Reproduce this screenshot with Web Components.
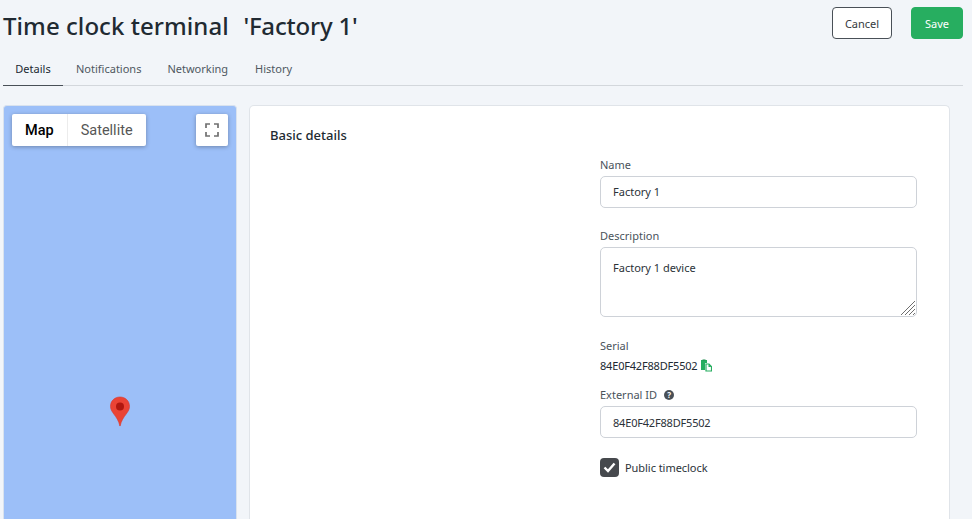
<!DOCTYPE html>
<html lang="en">
<head>
<meta charset="utf-8">
<title>Time clock terminal</title>
<style>
  html, body { margin: 0; height: 100%; overflow: hidden; }
  body { background: #f2f5f9; font-family: "Noto Sans", sans-serif; color: #212529; }
</style>
</head>
<body>
<terminal-page></terminal-page>

<script>
  // small helper, every element below is the same shape
  function define(name, html) {
    customElements.define(name, class extends HTMLElement {
      constructor() {
        super();
        this.attachShadow({ mode: 'open' }).innerHTML = html;
      }
    });
  }

  define('page-header', `
<style>
  :host { display: flex; justify-content: space-between; align-items: flex-start; padding: 7px 9px 0 3px; height: 46px; }
  h1 { margin: 0; font: 500 24px/37px "Noto Sans", sans-serif; letter-spacing: .06px; color: #212a32; white-space: pre; }
  h1 span { margin-left: 2px; letter-spacing: -.2px; }
  .actions { display: flex; gap: 19px; }
  button { height: 32px; border-radius: 4px; font: 400 11px "Noto Sans", sans-serif; padding: 0; }
  .cancel { width: 60px; background: #fff; border: 1px solid #495057; color: #343a40; }
  .save { width: 52px; background: #27ae60; border: 1px solid #27ae60; color: #fff; }
</style>
<h1>Time clock terminal  <span>'Factory 1'</span></h1>
<div class="actions">
  <button class="cancel">Cancel</button>
  <button class="save">Save</button>
</div>`);

  define('tab-bar', `
<style>
  :host { display: flex; margin: 0 9px 0 3px; height: 32px; border-bottom: 1px solid #d3d7dc; }
  a { padding: 0 13px; font: 400 11px/32px "Noto Sans", sans-serif; color: #4f5861; height: 32px; }
  a.active { color: #212a32; border-bottom: 1px solid #495057; width: 60px; padding: 0; text-align: center; }
  a:last-child { margin-left: 1px; }
</style>
<a class="active">Details</a><a>Notifications</a><a>Networking</a><a>History</a>`);

  define('map-panel', `
<style>
  :host { display: block; position: relative; width: 234px; height: 420px; box-sizing: border-box; background: #9cbff8; border-radius: 4px 4px 0 0; border: 1px solid #d9e2ee; border-bottom: 0; overflow: hidden; }
  .types { position: absolute; left: 8px; top: 8px; display: flex; height: 32px; background: #fff; border-radius: 2px; box-shadow: 0 1px 4px rgba(0,0,0,.3); font: 400 14.500px/33px Roboto, sans-serif; }
  .types span { padding: 0 13px; color: #565656; }
  .types span:first-child { font-weight: 500; color: #000; border-right: 1px solid #ececec; }
  .full { position: absolute; left: 192px; top: 8px; width: 32px; height: 32px; background: #fff; border-radius: 2px; box-shadow: 0 1px 4px rgba(0,0,0,.3); display: flex; align-items: center; justify-content: center; }
  .pin { position: absolute; left: 105px; top: 290px; }
</style>
<div class="types"><span>Map</span><span>Satellite</span></div>
<div class="full">
  <svg width="14" height="14" viewBox="0 0 14 14" fill="none" stroke="#707070" stroke-width="1.700">
    <path d="M1 5V1h4M9 1h4v4M13 9v4H9M5 13H1V9"/>
  </svg>
</div>
<svg class="pin" width="22" height="32" viewBox="0 0 22 32">
  <path d="M11 1C5.500 1 1.500 5 1.500 10.300c0 3.200 1.500 5.300 3.500 8 2.200 3 4.700 6.200 5.900 11.700h.2c1.200-5.500 3.700-8.700 5.900-11.700 2-2.700 3.500-4.800 3.500-8C20.500 5 16.500 1 11 1z" fill="#ea4335" stroke="#d9352a" stroke-width=".6"/>
  <circle cx="11" cy="10.500" r="4" fill="#b0170f"/>
</svg>`);

  define('form-field', `
<style>
  :host { display: block; }
  label { display: flex; align-items: center; font: 400 11px/15px "Noto Sans", sans-serif; color: #4a535b; margin-bottom: 4px; }
  .box { box-sizing: border-box; width: 317px; height: var(--h, 32px); padding: 0 12px; background: #fff; border: 1px solid #ced2d8; border-radius: 5px; font: 400 11px/var(--lh, 30px) "Noto Sans", sans-serif; letter-spacing: var(--ls, 0); color: #2b3238; position: relative; }
</style>
<label><slot name="label"></slot></label>
<div class="box"><slot></slot></div>`);

  define('resize-grip', `
<style>
  :host { position: absolute; right: 0; bottom: 0; width: 16px; height: 16px; line-height: 0; }
</style>
<svg width="16" height="16" viewBox="0 0 16 16" stroke="#6e6e6e" stroke-width="1" fill="none">
  <path d="M1 15 15 1M5 15 15 5M9 15l6-6M13 15l2-2"/>
</svg>`);

  define('serial-line', `
<style>
  :host { display: block; }
  .label { font: 400 11px/15px "Noto Sans", sans-serif; color: #4a535b; margin-bottom: 5px; }
  .value { display: flex; align-items: center; gap: 3px; font: 400 11px/15px "Noto Sans", sans-serif; letter-spacing: -.19px; color: #212a32; }
</style>
<div class="label">Serial</div>
<div class="value">84E0F42F88DF5502
  <svg width="12" height="13" viewBox="0 0 12 13">
    <path d="M1 1h6v3H5v7H1z" fill="#27ae60"/>
    <path d="M2.500 .5h3v1h-3z" fill="#1e8a4c"/>
    <path d="M6 5h3l2.500 2.500V12H6z" fill="#fff" stroke="#27ae60" stroke-width="1.200"/>
    <path d="M8.500 5v3h3" fill="#27ae60"/>
  </svg>
</div>`);

  define('check-row', `
<style>
  :host { display: flex; align-items: center; gap: 6px; font: 400 11px/19px "Noto Sans", sans-serif; letter-spacing: -.05px; color: #2b3238; }
  .tick { width: 19px; height: 19px; border-radius: 4px; background: #46494d; display: flex; align-items: center; justify-content: center; }
</style>
<span class="tick">
  <svg width="13" height="11" viewBox="0 0 13 11" fill="none" stroke="#fff" stroke-width="2.400">
    <path d="M1.500 5.500 5 9l6.500-7.500"/>
  </svg>
</span>
<slot></slot>`);

  define('details-card', `
<style>
  :host { display: block; box-sizing: border-box; width: 701px; height: 420px; background: #fff; border: 1px solid #e0e4e9; border-bottom: 0; border-radius: 5px 5px 0 0; padding: 20px 20px 0; }
  h2 { margin: 0; font: 500 13px/18px "Noto Sans", sans-serif; color: #212a32; }
  .form { display: flex; flex-direction: column; margin: 13px 0 0 330px; width: 317px; }
  .q { display: inline-block; width: 10px; height: 10px; margin-left: 7px; border-radius: 50%; background: #495057; color: #fff; font: 700 8px/10px "Noto Sans", sans-serif; text-align: center; }
  .gap-name { margin-bottom: 20px; }
  .gap-desc { margin-bottom: 21px; --h: 70px; }
  .gap-serial { margin-bottom: 14px; }
  .gap-ext { margin-bottom: 20px; --ls: -.19px; --lh: 31px; }
  span[slot] { display: flex; align-items: center; }
</style>
<h2>Basic details</h2>
<div class="form">
  <form-field class="gap-name"><span slot="label">Name</span>Factory 1</form-field>
  <form-field class="gap-desc"><span slot="label">Description</span><div style="padding-top:5px">Factory 1 device</div><resize-grip></resize-grip></form-field>
  <serial-line class="gap-serial"></serial-line>
  <form-field class="gap-ext"><span slot="label">External ID<i class="q" style="font-style:normal">?</i></span>84E0F42F88DF5502</form-field>
  <check-row>Public timeclock</check-row>
</div>`);

  define('terminal-page', `
<style>
  :host { display: block; }
  main { display: flex; gap: 12px; margin: 19px 0 0 3px; }
</style>
<page-header></page-header>
<tab-bar></tab-bar>
<main>
  <map-panel></map-panel>
  <details-card></details-card>
</main>`);
</script>
</body>
</html>
